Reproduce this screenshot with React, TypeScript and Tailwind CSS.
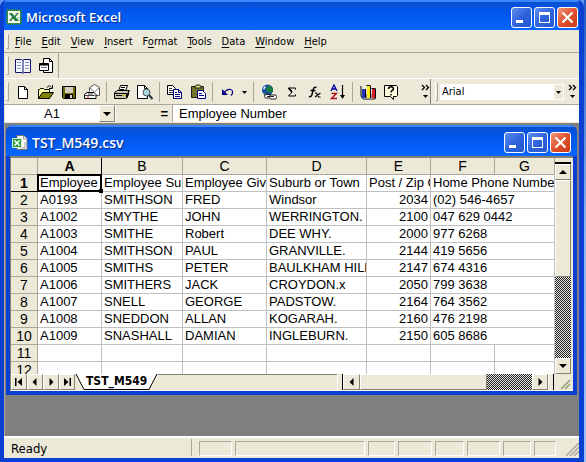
import type { ReactNode } from "react";

const ui = "font-['DejaVu_Sans_Condensed','Noto_Sans',sans-serif]";
const raised = "border border-t-white border-l-white border-r-[#85826f] border-b-[#85826f] bg-[#ece9d8]";
const checker = "bg-[repeating-conic-gradient(#222_0_25%,#e4e4e0_0_50%)] bg-[length:2px_2px]";

function Pic({ children, w = 16, h = 16 }: { children: ReactNode; w?: number; h?: number }) {
  return (
    <svg width={w} height={h} viewBox={`0 0 ${w} ${h}`} fill="none" className="shrink-0" aria-hidden="true">
      {children}
    </svg>
  );
}

function Arrow({ dir }: { dir: "up" | "down" | "left" | "right" }) {
  const d = {
    up: "M4 2l4 4H0z",
    down: "M0 2h8L4 6z",
    left: "M5.500 0v8L1.500 4z",
    right: "M2.500 0v8L6.500 4z",
  }[dir];
  return (
    <Pic w={8} h={8}>
      <path d={d} fill="#000" />
    </Pic>
  );
}

function SheetIcon() {
  return (
    <Pic>
      <path d="M1 1h14v14H1z" fill="#f4f8f0" stroke="#2e8b3c" strokeWidth="2" strokeDasharray="1 1" />
      <path d="M1.500 1.500h13v13h-13z" stroke="#3a8a45" />
      <path d="M3 4h3l2.500 3L11 4h2L9.500 8l3.500 4H9L7 9.500 5 12H3l3-4z" fill="#24803a" />
      <path d="M11 9h3M12 11h2M3 6h1" stroke="#8fc79a" />
    </Pic>
  );
}

function BookIcon() {
  return (
    <Pic>
      <path d="M5 .5h7l3 3v11H5z" fill="#fff" stroke="#777" />
      <path d="M11.500 1v3H15M13 7v6M8 13h5" stroke="#999" />
      <path d="M.5 3.500h9v9h-9z" fill="#2f9e3f" stroke="#d8f0d0" />
      <path d="M2.500 5.500l5 5M7.500 5.500l-5 5" stroke="#fff" strokeWidth="1.500" />
    </Pic>
  );
}

function WindowButtons() {
  const base = "flex size-[21px] items-center justify-center rounded-[3px] border border-white ";
  const blue = base + "bg-linear-to-br from-[#5f8ff0] via-[#2f63dc] to-[#2458cf]";
  return (
    <div className="flex gap-0.5">
      <button aria-label="Minimize" className={blue}>
        <Pic w={19} h={19}><path d="M4 12h7v3H4z" fill="#fff" /></Pic>
      </button>
      <button aria-label="Maximize" className={blue}>
        <Pic w={19} h={19}><path d="M4 4h11v11H4zM5 7v7h9V7z" fill="#fff" fillRule="evenodd" /></Pic>
      </button>
      <button aria-label="Close" className={base + "bg-linear-to-br from-[#f0987c] via-[#e0502c] to-[#c93a14]"}>
        <Pic w={19} h={19}><path d="M4.500 4.500l10 10M14.500 4.500l-10 10" stroke="#fff" strokeWidth="2.200" /></Pic>
      </button>
    </div>
  );
}

function Grip() {
  return <div className="mx-0.5 my-[3px] w-[3px] shrink-0 self-stretch border border-t-white border-l-white border-r-[#aca899] border-b-[#aca899]" />;
}

function Separator() {
  return <div className="mx-[3px] h-5 w-0 shrink-0 border-l border-[#aca899]" />;
}

function Tool({ label, children }: { label: string; children: ReactNode }) {
  return (
    <button aria-label={label} className="flex h-[23px] w-[23px] shrink-0 items-center justify-center">
      {children}
    </button>
  );
}

function More({ label }: { label: string }) {
  return (
    <button aria-label={label} className="flex shrink-0 items-center">
      <Pic w={9} h={16}>
        <path d="M1 1l2.500 2.500L1 6M5 1l2.500 2.500L5 6" stroke="#000" strokeWidth="1.300" />
        <path d="M2 11h5l-2.500 3z" fill="#000" />
      </Pic>
    </button>
  );
}

function StandardTools() {
  return (
    <>
      <Tool label="New"><Pic><path d="M3.500 2.500h6l3 3v9h-9z" fill="#fff" stroke="#000" /><path d="M9.500 2.500v3h3" stroke="#000" /></Pic></Tool>
      <Tool label="Open">
        <Pic>
          <path d="M.5 14.500v-9h1l1-1h3l1 1h5v3" fill="#ffffa8" stroke="#000" />
          <path d="M.5 14.500l4-6h11l-4 6z" fill="#808000" stroke="#000" />
          <path d="M9 3.500c1-2 3-2 4.500 0M14.500 1v3.500H11" stroke="#000" />
        </Pic>
      </Tool>
      <Tool label="Save">
        <Pic>
          <path d="M1.500 2.500h13v12h-12l-1-1z" fill="#6b6b00" stroke="#000" />
          <path d="M4 3h8v6H4z" fill="#d4d0c0" /><path d="M4 10h8v4H4z" fill="#000" /><path d="M9 11h2v3H9z" fill="#ddd" />
        </Pic>
      </Tool>
      <Tool label="E-mail">
        <Pic>
          <path d="M5.500 7.500v-4l5-3 5 3v8h-5" fill="#fff" stroke="#555" /><path d="M6 4l4.500 4L15 4" stroke="#777" />
          <path d="M3 8.500h7l2 2v4H.5v-4z" fill="#fff" stroke="#000" /><path d="M1 11.500h10M4 10h5" stroke="#444" /><path d="M3 13h2" stroke="#d22" />
        </Pic>
      </Tool>
      <Separator />
      <Tool label="Print">
        <Pic>
          <path d="M4.500 7l2-5.500h7l-2 5.500" fill="#fff" stroke="#000" /><path d="M7 3.500h4M6 5.500h4" stroke="#000" />
          <path d="M.5 8.500l3-2h12l-2 3v4l-2 1h-11z" fill="#c8c5a8" stroke="#000" />
          <path d="M.5 9.500h12v4M2 11.500h9M14.500 7v4l-2 2" stroke="#000" /><path d="M8 11h3v1H8z" fill="#b5b500" />
        </Pic>
      </Tool>
      <Tool label="Print Preview">
        <Pic>
          <path d="M.5 1.500h7l3 3v10H.5z" fill="#fff" stroke="#000" /><path d="M7.500 1.500v3h3" stroke="#000" />
          <circle cx="9.500" cy="8.500" r="3.500" fill="#a9d5dc" stroke="#555" /><path d="M12 11l3.500 4" stroke="#234" strokeWidth="2" />
        </Pic>
      </Tool>
      <Separator />
      <Tool label="Copy">
        <Pic>
          <path d="M.5 1.500h5l3 3v6h-8z" fill="#fff" stroke="#000" /><path d="M2 4.500h3M2 6.500h4M2 8.500h4" stroke="#334" />
          <path d="M6.500 5.500h5l3 3v6h-8z" fill="#fff" stroke="#000080" /><path d="M11.500 5.500v3h3M8 8.500h2M8 10.500h5M8 12.500h5" stroke="#000080" />
        </Pic>
      </Tool>
      <Tool label="Paste">
        <Pic>
          <path d="M1.500 2.500h12v11h-12z" fill="#77752a" stroke="#222" /><path d="M5 4V2l2-1h2l2 1v2z" fill="#ddd86a" stroke="#222" />
          <path d="M7.500 6.500h5l3 3v5h-8z" fill="#fff" stroke="#000080" /><path d="M9 9.500h3M9 11.500h5" stroke="#000080" />
        </Pic>
      </Tool>
      <Separator />
      <Tool label="Undo"><Pic><path d="M4 9c2-3 4-4 6.500-3.500s3 3.500.5 6" stroke="#000080" strokeWidth="1.200" /><path d="M2 5v6h6z" fill="#000080" /></Pic></Tool>
      <button aria-label="Undo list" className="flex w-[11px] shrink-0 justify-center"><Pic w={5} h={4}><path d="M0 1h5L2.500 4z" fill="#000" /></Pic></button>
      <Separator />
      <Tool label="Insert Hyperlink">
        <Pic>
          <circle cx="6.500" cy="6" r="5.500" fill="#1447a8" /><path d="M5 4l3-3 4 3v4L8 9 5 7zM2 8l3 1v2z" fill="#16793e" /><path d="M2 4l2-2 1 1-2 3z" fill="#d8f2ff" />
          <rect x="3.500" y="10.500" width="7" height="3.500" rx="1.500" fill="#fff" stroke="#222" /><rect x="8.500" y="11" width="7" height="4" rx="1.500" fill="#fff" stroke="#222" /><path d="M6 12.500h7" stroke="#222" />
        </Pic>
      </Tool>
      <Tool label="AutoSum"><Pic><path d="M11.500 5.500V4h-7L8 8l-3.500 4h7v-1.500" stroke="#000" /><path d="M4.500 4L8 8" stroke="#000" strokeWidth="1.800" /></Pic></Tool>
      <Tool label="Paste Function">
        <Pic>
          <path d="M9.500 3.500c-2-1-3 0-3.500 3l-1 4c-.5 2-1.500 2.500-3 2M3.500 6.500h5" stroke="#000" strokeWidth="1.400" />
          <path d="M8 9h1.500l2 4h2M13.500 9L8 13" stroke="#000" strokeWidth="1.100" />
        </Pic>
      </Tool>
      <Tool label="Sort Ascending">
        <Pic>
          <path d="M1 7l3-6 3 6M2 5h4" stroke="#0000a0" strokeWidth="1.300" /><path d="M1.500 9.500h5l-5 5h5.500" stroke="#b01020" strokeWidth="1.400" />
          <path d="M12.500 1v11" stroke="#000" strokeWidth="1.200" /><path d="M10 11h5l-2.500 4z" fill="#000" />
        </Pic>
      </Tool>
      <Separator />
      <Tool label="Chart Wizard">
        <Pic>
          <path d="M1 2v10l2 3h12l1-2" stroke="#000" /><path d="M2 12l2-2h10v3l-2 2H3z" fill="#999" />
          <path d="M2.500 5.500h2v8h-2z" fill="#2036c0" stroke="#2036c0" /><path d="M5.500 5v9" stroke="#000" /><path d="M7 2h3v12H7z" fill="#ffe81a" /><path d="M10.500 2v12M6.500 1.500h4" stroke="#000" /><path d="M12 5h3v9h-3z" fill="#d5202a" /><path d="M15.500 5v9M11.500 4.500h4" stroke="#000" />
        </Pic>
      </Tool>
      <Tool label="Help">
        <Pic>
          <path d="M1.500 1.500h12l1 1v9l-1 1h-3v3l-3-3h-6z" fill="#ffffe1" stroke="#000" />
          <path d="M5.500 5c0-3 5-3 5 0 0 1.500-2.500 1.500-2.500 3.500M8 10v1.500" stroke="#000" strokeWidth="1.500" />
        </Pic>
      </Tool>
    </>
  );
}

const menus = [
  { name: "File", key: 0 },
  { name: "Edit", key: 0 },
  { name: "View", key: 0 },
  { name: "Insert", key: 0 },
  { name: "Format", key: 1 },
  { name: "Tools", key: 0 },
  { name: "Data", key: 0 },
  { name: "Window", key: 0 },
  { name: "Help", key: 0 },
];

const rows = [
  ["Employee Number", "Employee Surname", "Employee Given", "Suburb or Town", "Post / Zip Code", "Home Phone Number"],
  ["A0193", "SMITHSON", "FRED", "Windsor", "2034", "(02) 546-4657"],
  ["A1002", "SMYTHE", "JOHN", "WERRINGTON.", "2100", "047 629 0442"],
  ["A1003", "SMITHE", "Robert", "DEE WHY.", "2000", "977 6268"],
  ["A1004", "SMITHSON", "PAUL", "GRANVILLE.", "2144", "419 5656"],
  ["A1005", "SMITHS", "PETER", "BAULKHAM HILLS", "2147", "674 4316"],
  ["A1006", "SMITHERS", "JACK", "CROYDON.x", "2050", "799 3638"],
  ["A1007", "SNELL", "GEORGE", "PADSTOW.", "2164", "764 3562"],
  ["A1008", "SNEDDON", "ALLAN", "KOGARAH.", "2160", "476 2198"],
  ["A1009", "SNASHALL", "DAMIAN", "INGLEBURN.", "2150", "605 8686"],
  ["", "", "", "", "", "", ""],
  ["", "", "", "", "", "", ""],
];

const head = "overflow-hidden border-r border-b border-[#aca899] bg-[#ece9d8] p-0 text-center text-[14px] leading-4 ";

function Grid() {
  return (
    <table className="w-full table-fixed border-separate border-spacing-0 bg-white font-['Liberation_Sans',Arial,sans-serif] text-[13px] leading-4 text-black">
      <colgroup>
        <col className="w-[27px]" />
        <col className="w-[64px]" />
        <col className="w-[81px]" />
        <col className="w-[84px]" />
        <col className="w-[100px]" />
        <col className="w-[64px]" />
        <col className="w-[64px]" />
        <col />
      </colgroup>
      <thead>
        <tr className="h-[17px]">
          <th className={head} aria-label="Select all" />
          {["A", "B", "C", "D", "E", "F", "G"].map((c) => (
            <th key={c} scope="col" className={head + (c === "A" ? "border-r-black font-bold" : "font-normal")}>{c}</th>
          ))}
        </tr>
      </thead>
      <tbody>
        {rows.map((cells, r) => (
          <tr key={r} className="h-[17px]">
            <th scope="row" className={head + (r === 0 ? "border-b-black font-bold" : "font-normal")}>{r + 1}</th>
            {cells.map((text, c) => {
              const active = r === 0 && c === 0;
              return (
                <td
                  key={c}
                  colSpan={c === 5 && cells.length === 6 ? 2 : 1}
                  className={
                    "h-[17px] border-r border-b border-[#c0c0c0] py-0 pr-0.5 pl-0.5 whitespace-nowrap " +
                    (active ? "relative " : "overflow-hidden ") +
                    (c === 4 && r > 0 ? "text-right" : "")
                  }
                >
                  {active ? (
                    <>
                      <div className="overflow-hidden">{text}</div>
                      <div className="absolute -inset-x-px -top-px -bottom-px border-2 border-black" />
                      <div className="absolute -right-0.5 -bottom-0.5 size-1 bg-black" />
                    </>
                  ) : (
                    text
                  )}
                </td>
              );
            })}
          </tr>
        ))}
      </tbody>
    </table>
  );
}

function VerticalScroll() {
  return (
    <div className="flex w-4 shrink-0 flex-col bg-[#ece9d8]">
      <div className="h-[6px] shrink-0 border-b-2 border-black" />
      <button aria-label="Scroll up" className={"flex h-4 shrink-0 items-center justify-center " + raised}><Arrow dir="up" /></button>
      <div className={"flex flex-1 flex-col " + checker}>
        <div className={"h-[97px] " + raised} />
      </div>
      <button aria-label="Scroll down" className={"flex h-4 shrink-0 items-center justify-center " + raised}><Arrow dir="down" /></button>
    </div>
  );
}

function SheetBar() {
  const nav = "flex h-4 w-4 items-center justify-center " + raised;
  return (
    <div className="flex h-4 shrink-0 bg-[#ece9d8]">
      <button aria-label="First sheet" className={nav}><Pic w={8} h={8}><path d="M0 0h1.500v8H0zM7 0v8L2.500 4z" fill="#000" /></Pic></button>
      <button aria-label="Previous sheet" className={nav}><Arrow dir="left" /></button>
      <button aria-label="Next sheet" className={nav}><Arrow dir="right" /></button>
      <button aria-label="Last sheet" className={nav}><Pic w={8} h={8}><path d="M6.500 0H8v8H6.500zM1 0v8l4.500-4z" fill="#000" /></Pic></button>
      <div className="flex flex-1">
        <Pic w={9} h={16}><path d="M1 0l8 15V0z" fill="#fff" /><path d="M1 0l8 15.500" stroke="#000" /></Pic>
        <button className={"h-4 border-b border-black bg-white px-0.5 text-[12px] leading-[15px] font-bold " + ui}>TST_M549</button>
        <Pic w={9} h={16}><path d="M8 0L0 15V0z" fill="#fff" /><path d="M8 0L0 15.500" stroke="#000" /></Pic>
        <div className="flex-1 border-t border-[#85826f]" />
      </div>
      <div className="w-[6px] border-r border-l border-l-white border-r-black" />
      <button aria-label="Scroll left" className={"flex w-[17px] items-center justify-center " + raised}><Arrow dir="left" /></button>
      <div className={"flex w-[172px] " + checker}>
        <div className={"w-[127px] " + raised} />
      </div>
      <button aria-label="Scroll right" className={"flex w-4 items-center justify-center " + raised}><Arrow dir="right" /></button>
      <div className="mr-px w-[6px] border-r border-l border-l-white border-r-black" />
      <Pic w={16} h={16}><path d="M6 15L15 6M10 15l5-5" stroke="#8fa06c" strokeWidth="1.500" /></Pic>
    </div>
  );
}

const titleText = "flex-1 truncate font-['Open_Sans','Noto_Sans',sans-serif] leading-5 font-semibold text-white [text-shadow:1px_1px_1px_#0a2a80] ";
const titleBg = "bg-linear-to-b from-[#0a4fd0] via-[#0055ea] via-30% to-[#0866ff]";

function WorkbookWindow() {
  return (
    <section aria-label="TST_M549.csv" className="mr-0.5 ml-px overflow-hidden rounded-t-[7px] bg-[#0a3fd2]">
      <header className={"flex h-[31px] items-center gap-1 border-t-2 border-[#3a86ff] pt-0.5 pr-1.5 pl-1.5 " + titleBg}>
        <BookIcon />
        <h2 className={titleText + "text-[14px]"}>TST_M549.csv</h2>
        <WindowButtons />
      </header>
      <div className="mx-1 mb-1 border-t-2 border-b border-l border-[#85826f] border-b-white bg-[#ece9d8] pr-0.5">
        <div className="flex h-[216px]">
          <div className="min-w-0 flex-1 overflow-hidden"><Grid /></div>
          <VerticalScroll />
        </div>
        <SheetBar />
      </div>
    </section>
  );
}

function StatusBar() {
  const cell = "h-[15px] border border-t-[#aca899] border-l-[#aca899] border-r-white border-b-white ";
  return (
    <footer className={"flex h-[22px] shrink-0 items-end gap-[3px] border-t-2 border-white bg-[#ece9d8] pb-0.5 text-[13px] text-black " + ui}>
      <div className="h-[17px] w-[188px] shrink-0 border-r border-[#aca899] pl-[7px] leading-5">Ready</div>
      <div className={cell + "ml-1 w-[33px]"} />
      <div className={cell + "flex-1"} />
      <div className={cell + "w-[27px]"} />
      <div className={cell + "w-[34px]"} />
      <div className={cell + "w-[29px]"} />
      <div className={cell + "w-[33px]"} />
      <div className={cell + "w-[28px]"} />
      <div className={cell + "w-[22px]"} />
      <div className="flex w-5 justify-end">
        <Pic w={14} h={14}><path d="M1 14L14 1M5 14l9-9M9 14l5-5" stroke="#aca899" strokeWidth="1.500" /></Pic>
      </div>
    </footer>
  );
}

export default function App() {
  return (
    <div className="flex min-h-screen bg-[#5f9af0]">
      <main className="flex min-w-0 flex-1 flex-col overflow-hidden rounded-t-[7px] border-r-[5px] border-b-4 border-l-4 border-[#0a3fd2]">
        <header className={"-mx-1 flex h-[30px] shrink-0 items-center gap-1 border-t-2 border-[#3a86ff] pt-0.5 pr-[5px] pl-1.5 " + titleBg}>
          <SheetIcon />
          <h1 className={titleText + "text-[13px]"}>Microsoft Excel</h1>
          <WindowButtons />
        </header>

        <nav className={"flex h-[23px] shrink-0 items-center border-b border-[#aca899] bg-[#ece9d8] pt-px text-[11px] text-black " + ui}>
          <Grip />
          <div className="-ml-px flex">
            {menus.map(({ name, key }) => (
              <button key={name} className="px-[5px] leading-4">
                {name.slice(0, key)}<span className="underline underline-offset-2">{name[key]}</span>{name.slice(key + 1)}
              </button>
            ))}
          </div>
        </nav>

        <div className="flex h-[26px] shrink-0 items-stretch border-b border-white bg-[#ece9d8]">
          <div className="flex items-center border-r border-[#aca899] pr-px">
            <Grip />
            <Tool label="Compare side by side">
              <Pic>
                <path d="M.5 1.500h6l1 1 1-1h7v13H9l-1 1-1-1H.5z" fill="#f4f8ff" stroke="#14146e" /><path d="M8 2v13" stroke="#14146e" />
                <path d="M2 4.500h4M2 7.500h4M2 10.500h4M10 4.500h4M10 7.500h4M10 10.500h4" stroke="#8a94c8" />
              </Pic>
            </Tool>
            <Tool label="Arrange windows">
              <Pic>
                <path d="M5.500.5h6l3 3v11h-9z" fill="#fff" stroke="#000" /><path d="M11.500.5v3h3" stroke="#000" />
                <path d="M1.500 5.500h9v7h-9z" fill="#fff" stroke="#000" /><path d="M1.500 6.500h9" stroke="#000" strokeWidth="2" /><path d="M3 9.500h6" stroke="#77a" />
              </Pic>
            </Tool>
          </div>
        </div>

        <div className="flex h-[26px] shrink-0 items-center border-b border-[#aca899] bg-[#ece9d8]">
          <Grip />
          <StandardTools />
          <div className="flex flex-1 items-center justify-end self-stretch border-r border-[#85826f]"><More label="More standard buttons" /></div>
          <div className="flex items-center self-stretch pr-0.5 pl-0.5">
            <Grip />
            <div className="relative mr-1 flex">
              <select aria-label="Font" defaultValue="Arial" className={"h-4 w-[124px] appearance-none bg-white pl-0.5 text-[11px] leading-4 text-black " + ui}>
                <option>Arial</option>
              </select>
              <span className="pointer-events-none absolute inset-y-px right-px flex w-[9px] items-center justify-center bg-[#ece9d8]">
                <Pic w={5} h={4}><path d="M0 1h5L2.500 4z" fill="#000" /></Pic>
              </span>
            </div>
            <More label="More formatting buttons" />
          </div>
        </div>

        <div className="flex h-[18px] shrink-0 border-b border-[#ece9d8] bg-[#ece9d8] font-['Liberation_Sans',Arial,sans-serif] text-[13px] leading-4 text-black">
          <input aria-label="Name box" defaultValue="A1" className="ml-px w-[94px] bg-white text-center" />
          <button aria-label="Name list" className={"flex w-4 items-center justify-center " + raised}><Arrow dir="down" /></button>
          <button className="w-[57px] border-l border-white pr-1 text-right font-bold">=</button>
          <input aria-label="Formula" defaultValue="Employee Number" className="min-w-0 flex-1 border-l border-[#aca899] bg-white pl-1.5" />
        </div>

        <div className="flex-1 border-l border-[#aca899] bg-[#808080] pt-0.5">
          <WorkbookWindow />
        </div>

        <StatusBar />
      </main>
      <aside className="w-0.5 shrink-0 bg-linear-to-b from-[#1c58c4] via-[#8ab4f4] to-[#9cc0f6]" />
    </div>
  );
}
